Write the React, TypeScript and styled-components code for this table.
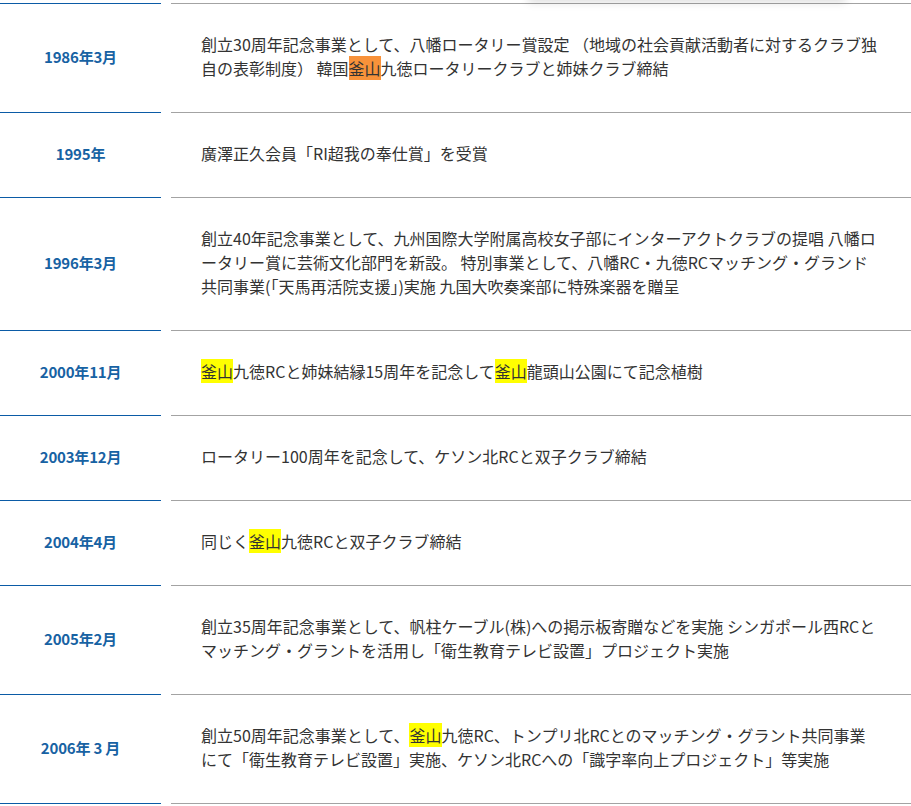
import styled, { createGlobalStyle } from "styled-components";

const GlobalStyle = createGlobalStyle`
  body {
    margin: 0;
    background: #fff;
    font-family: "Noto Sans CJK JP", "Noto Sans", sans-serif;
    color: #333;
  }
`;

const Page = styled.div`
  position: relative;
  padding-top: 3px;
  overflow: hidden;
`;

const FloatingShadow = styled.div`
  position: absolute;
  top: -40px;
  left: 528px;
  width: 318px;
  height: 40px;
  background: #fff;
  box-shadow: 0 2px 9px rgba(0, 0, 0, 0.14);
`;

const History = styled.div`
  display: grid;
  grid-template-columns: 161px 1fr;
  column-gap: 10px;
`;

const DateCell = styled.div`
  display: flex;
  align-items: center;
  justify-content: center;
  padding-bottom: 3px;
  border-top: 1px solid #0b5ba6;
  font-size: 15px;
  font-weight: 700;
  color: #1762a3;
  letter-spacing: -0.2px;
`;

const TextCell = styled.div`
  border-top: 1px solid #a3a3a3;
  padding: 28px 30px 32px 30px;
  font-size: 16px;
  line-height: 24px;
  color: #333;
`;

const EndLine = styled.div<{ $blue?: boolean }>`
  border-top: 1px solid ${(p) => (p.$blue ? "#0b5ba6" : "#a3a3a3")};
  height: 3px;
`;

const Mark = styled.span<{ $orange?: boolean }>`
  background: ${(p) => (p.$orange ? "#f8923a" : "#ffff00")};
`;

const B = () => <Mark>釜山</Mark>;

const rows: { date: string; text: React.ReactNode }[] = [
  {
    date: "1986年3月",
    text: (
      <>
        創立30周年記念事業として、八幡ロータリー賞設定
        （地域の社会貢献活動者に対するクラブ独自の表彰制度） 韓国
        <Mark $orange>釜山</Mark>九徳ロータリークラブと姉妹クラブ締結
      </>
    ),
  },
  { date: "1995年", text: "廣澤正久会員「RI超我の奉仕賞」を受賞" },
  {
    date: "1996年3月",
    text:
      "創立40年記念事業として、九州国際大学附属高校女子部にインターアクトクラブの提唱 八幡ロータリー賞に芸術文化部門を新設。 特別事業として、八幡RC・九徳RCマッチング・グランド共同事業(「天馬再活院支援」)実施 九国大吹奏楽部に特殊楽器を贈呈",
  },
  {
    date: "2000年11月",
    text: (
      <>
        <B />
        九徳RCと姉妹結縁15周年を記念して
        <B />
        龍頭山公園にて記念植樹
      </>
    ),
  },
  { date: "2003年12月", text: "ロータリー100周年を記念して、ケソン北RCと双子クラブ締結" },
  {
    date: "2004年4月",
    text: (
      <>
        同じく
        <B />
        九徳RCと双子クラブ締結
      </>
    ),
  },
  {
    date: "2005年2月",
    text:
      "創立35周年記念事業として、帆柱ケーブル(株)への掲示板寄贈などを実施 シンガポール西RCとマッチング・グラントを活用し「衛生教育テレビ設置」プロジェクト実施",
  },
  {
    date: "2006年 3 月",
    text: (
      <>
        創立50周年記念事業として、
        <B />
        九徳RC、トンプリ北RCとのマッチング・グラント共同事業にて「衛生教育テレビ設置」実施、ケソン北RCへの「識字率向上プロジェクト」等実施
      </>
    ),
  },
];

export default function App() {
  return (
    <>
      <GlobalStyle />
      <Page>
        <FloatingShadow />
        <History>
          {rows.map((r) => (
            <>
              <DateCell key={r.date + "d"}>{r.date}</DateCell>
              <TextCell key={r.date + "t"}>{r.text}</TextCell>
            </>
          ))}
          <EndLine $blue />
          <EndLine />
        </History>
      </Page>
    </>
  );
}
